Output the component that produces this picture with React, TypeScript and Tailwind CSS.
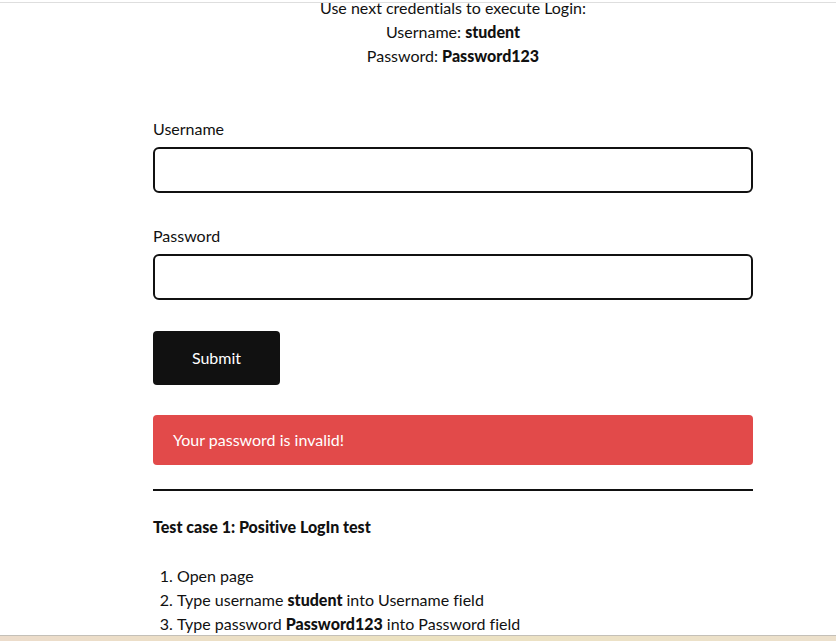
export default function App() {
  return (
    <div className="relative min-h-[641px] bg-white text-[16px] leading-6 text-[#111] [font-variant-ligatures:none]" style={{ fontFamily: "Lato, 'Open Sans', sans-serif" }}>
      {/* top strip */}
      <div className="h-[2px]" />
      <div className="h-px bg-[#dedede]" />

      <div className="ml-[153px] w-[600px] mt-[-7px]">
        <div className="text-center">
          <p>Use next credentials to execute Login:</p>
          <p>
            Username: <b className="font-black">student</b>
          </p>
          <p>
            Password: <b className="font-black">Password123</b>
          </p>
        </div>

        <form className="mt-[49px] flex flex-col">
          <label className="block">Username</label>
          <input type="text" className="mt-[6px] h-[46px] w-full rounded-[6px] border-2 border-[#111] outline-none" />

          <label className="mt-[31px] block">Password</label>
          <input type="password" className="mt-[6px] h-[46px] w-full rounded-[6px] border-2 border-[#111] outline-none" />

          <button type="button" className="mt-[31px] h-[54px] w-[127px] rounded-[4px] bg-[#111] text-white">
            Submit
          </button>
        </form>

        <div className="mt-[30px] flex h-[50px] items-center rounded-[4px] bg-[#e24a4a] px-5 text-white">
          Your password is invalid!
        </div>

        <hr className="mt-[24px] border-t-2 border-[#111]" />

        <h3 className="mt-[24px] font-black">Test case 1: Positive LogIn test</h3>

        <ol className="mt-[25px] list-decimal pl-6">
          <li>Open page</li>
          <li>
            Type username <b className="font-black">student</b> into Username field
          </li>
          <li>
            Type password <b className="font-black">Password123</b> into Password field
          </li>
        </ol>
      </div>

      {/* bottom window strip */}
      <div className="fixed bottom-0 left-0 h-[6px] w-full border-t border-[#c4c0b8] bg-gradient-to-r from-[#ecdccb] via-[#ece2c0] to-[#ece0cc]" />
    </div>
  );
}
